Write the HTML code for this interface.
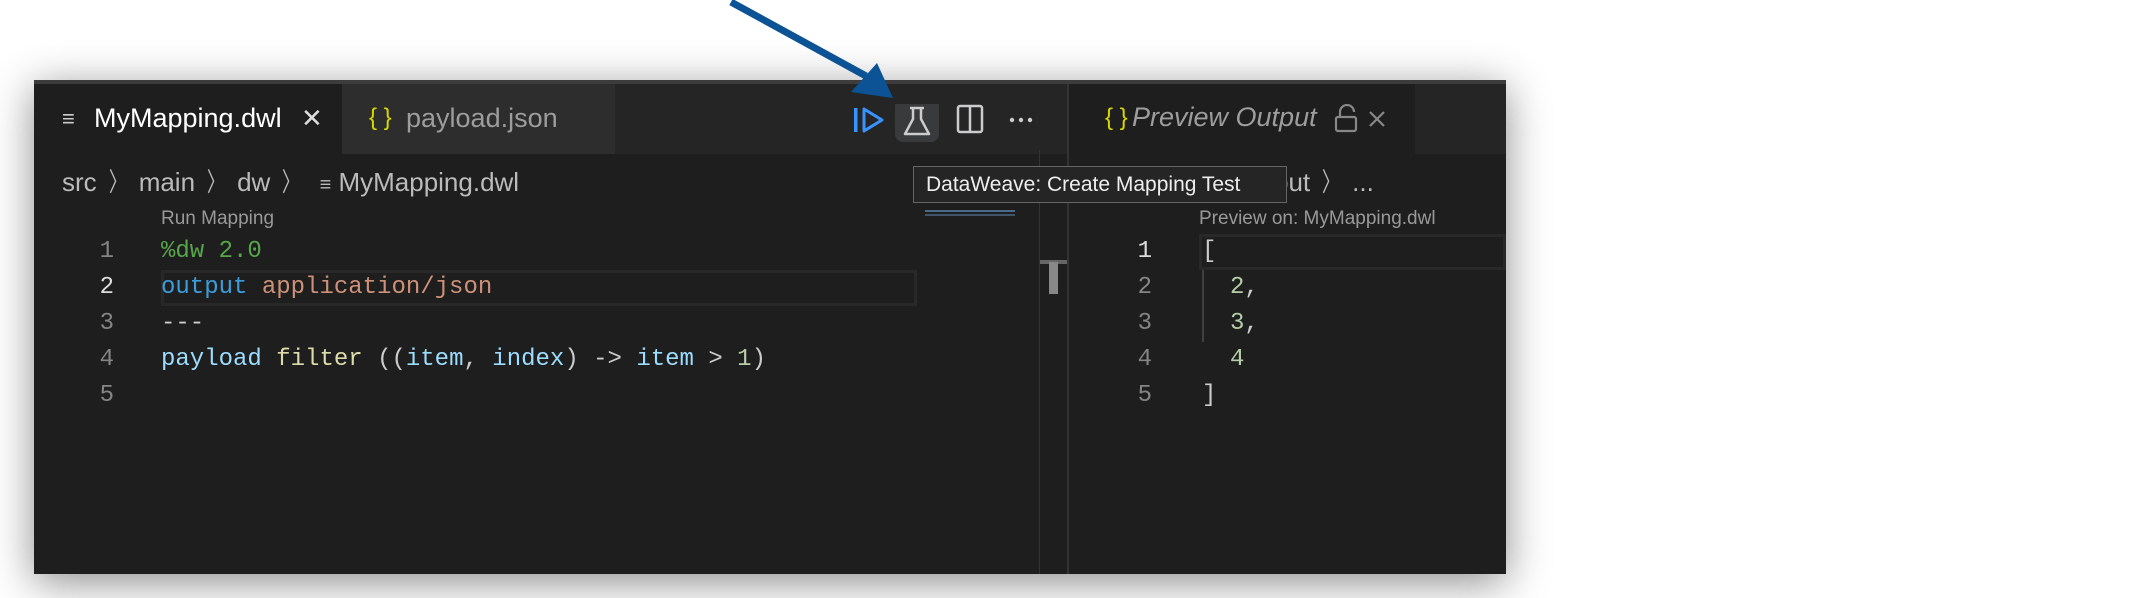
<!DOCTYPE html>
<html><head><style>
*{margin:0;padding:0;box-sizing:border-box}
body{width:2142px;height:598px;background:#fff;position:relative;overflow:hidden;font-family:"Liberation Sans",sans-serif}
.a{position:absolute}
.win{left:34px;top:80px;width:1472px;height:494px;background:#1e1e1e;box-shadow:0 8px 40px rgba(0,0,0,.45);border-top:4px solid #3c3c3c}
.t{position:absolute;white-space:nowrap}
.mono{font-family:"Liberation Mono",monospace;font-size:24px}
.ln{color:#858585;width:40px;text-align:right}
.ch{display:inline-block;margin:0 8px;transform:scaleX(.7)}
</style></head><body>
<div class="a win">
 <div class="a" style="left:0;top:0;width:1472px;height:70px;background:#252526"></div>
 <div class="a" style="left:0;top:0;width:308px;height:70px;background:#1e1e1e"></div>
 <div class="a" style="left:308px;top:0;width:273px;height:70px;background:#2d2d2d"></div>
 <div class="t" style="left:28px;top:22px;color:#ccc;font-size:22px">≡</div>
 <div class="t" style="left:60px;top:19px;color:#fff;font-size:27px">MyMapping.dwl</div>
 <div class="t" style="left:267px;top:19px;color:#ddd;font-size:26px">✕</div>
 <div class="t" style="left:335px;top:20px;color:#d7d700;font-size:24px">{ }</div>
 <div class="t" style="left:372px;top:19px;color:#9d9d9d;font-size:27px">payload.json</div>
 <svg class="a" style="left:820px;top:20px" width="230" height="50">
  <rect x="0" y="4" width="3.5" height="24" fill="#3794ff"/>
  <path d="M10 5 L28 16 L10 27 Z" fill="none" stroke="#3794ff" stroke-width="3" stroke-linejoin="round"/>
  <rect x="41" y="-6" width="44" height="44" rx="8" fill="#393a3b"/>
  <path d="M56 4 H70 M59 4 V15 L51 30 H75 L67 15 V4" fill="none" stroke="#ccc" stroke-width="2.5" stroke-linejoin="round"/>
  <rect x="104" y="2" width="24" height="26" rx="2" fill="none" stroke="#ccc" stroke-width="2.5"/>
  <line x1="116" y1="2" x2="116" y2="28" stroke="#ccc" stroke-width="2.5"/>
  <circle cx="158" cy="16" r="2.2" fill="#ccc"/><circle cx="167" cy="16" r="2.2" fill="#ccc"/><circle cx="176" cy="16" r="2.2" fill="#ccc"/>
 </svg>
 <div class="a" style="left:1033px;top:0;width:2px;height:490px;background:#333"></div>
 <div class="a" style="left:1035px;top:0;width:346px;height:70px;background:#1e1e1e"></div>
 <div class="t" style="left:1071px;top:20px;color:#d7d700;font-size:24px">{ }</div>
 <div class="t" style="left:1098px;top:18px;color:#9d9d9d;font-size:27px;font-style:italic">Preview Output</div>
 <svg class="a" style="left:1300px;top:20px" width="60" height="30"><path d="M6 12 V8 a7 7 0 0 1 14 0" fill="none" stroke="#888" stroke-width="2.2"/><rect x="2" y="13" width="20" height="14" rx="2" fill="none" stroke="#888" stroke-width="2.2"/><path d="M36 8 L50 22 M50 8 L36 22" stroke="#888" stroke-width="2.2"/></svg>
 <div class="t" style="left:28px;top:78px;color:#bbb;font-size:26px">src<span class="ch">〉</span>main<span class="ch">〉</span>dw<span class="ch">〉</span> <span style="font-size:20px">≡</span> MyMapping.dwl</div>
 <div class="t" style="left:1240px;top:78px;color:#bbb;font-size:26px">put<span class="ch">〉</span>...</div>
 <div class="t" style="left:127px;top:124px;color:#999;font-size:19px">Run Mapping</div>
 <div class="t" style="left:1165px;top:124px;color:#999;font-size:19px">Preview on: MyMapping.dwl</div>
 <div class="a" style="left:127px;top:186px;width:756px;height:36px;border:3px solid #282828"></div>
 <div class="a" style="left:1165px;top:150px;width:307px;height:36px;border:3px solid #282828"></div>
 <div class="a" style="left:1168px;top:186px;width:2px;height:72px;background:#404040"></div>
 <div class="t mono ln" style="left:40px;top:154px">1</div>
 <div class="t mono ln" style="left:40px;top:190px;color:#ddd">2</div>
 <div class="t mono ln" style="left:40px;top:226px">3</div>
 <div class="t mono ln" style="left:40px;top:262px">4</div>
 <div class="t mono ln" style="left:40px;top:298px">5</div>
 <div class="t mono" style="left:127px;top:154px;color:#57a64a">%dw 2.0</div>
 <div class="t mono" style="left:127px;top:190px"><span style="color:#3b9cdb">output</span> <span style="color:#ce9178">application/json</span></div>
 <div class="t mono" style="left:127px;top:226px;color:#ccc">---</div>
 <div class="t mono" style="left:127px;top:262px"><span style="color:#9cdcfe">payload</span> <span style="color:#dcdcaa">filter</span> <span style="color:#ccc">((</span><span style="color:#9cdcfe">item</span><span style="color:#ccc">, </span><span style="color:#9cdcfe">index</span><span style="color:#ccc">) -&gt; </span><span style="color:#9cdcfe">item</span><span style="color:#ccc"> &gt; </span><span style="color:#b5cea8">1</span><span style="color:#ccc">)</span></div>
 <div class="t mono ln" style="left:1078px;top:154px;color:#ddd">1</div>
 <div class="t mono ln" style="left:1078px;top:190px">2</div>
 <div class="t mono ln" style="left:1078px;top:226px">3</div>
 <div class="t mono ln" style="left:1078px;top:262px">4</div>
 <div class="t mono ln" style="left:1078px;top:298px">5</div>
 <div class="t mono" style="left:1168px;top:154px;color:#ccc">[</div>
 <div class="t mono" style="left:1196px;top:190px;color:#b5cea8">2<span style="color:#ccc">,</span></div>
 <div class="t mono" style="left:1196px;top:226px;color:#b5cea8">3<span style="color:#ccc">,</span></div>
 <div class="t mono" style="left:1196px;top:262px;color:#b5cea8">4</div>
 <div class="t mono" style="left:1168px;top:298px;color:#ccc">]</div>
 <div class="a" style="left:891px;top:126px;width:90px;height:2px;background:#4a6a8a"></div>
 <div class="a" style="left:891px;top:130px;width:90px;height:2px;background:#5a7a9a;opacity:.6"></div>
 <div class="a" style="left:1005px;top:66px;width:1px;height:424px;background:#333"></div>
 <div class="a" style="left:1006px;top:176px;width:27px;height:4px;background:#666"></div>
 <div class="a" style="left:1015px;top:178px;width:9px;height:32px;background:#888"></div>
</div>
<svg class="a" style="left:0;top:0;z-index:5" width="1000" height="120"><line x1="731" y1="2" x2="866" y2="76" stroke="#0b5394" stroke-width="7"/><polygon points="893,98 851,92 877,63" fill="#0b5394"/></svg>
<div class="a" style="left:913px;top:166px;width:374px;height:37px;background:#252526;border:1px solid #666;color:#eee;font-size:21px;padding:6px 0 0 12px;white-space:nowrap">DataWeave: Create Mapping Test</div>
</body></html>
